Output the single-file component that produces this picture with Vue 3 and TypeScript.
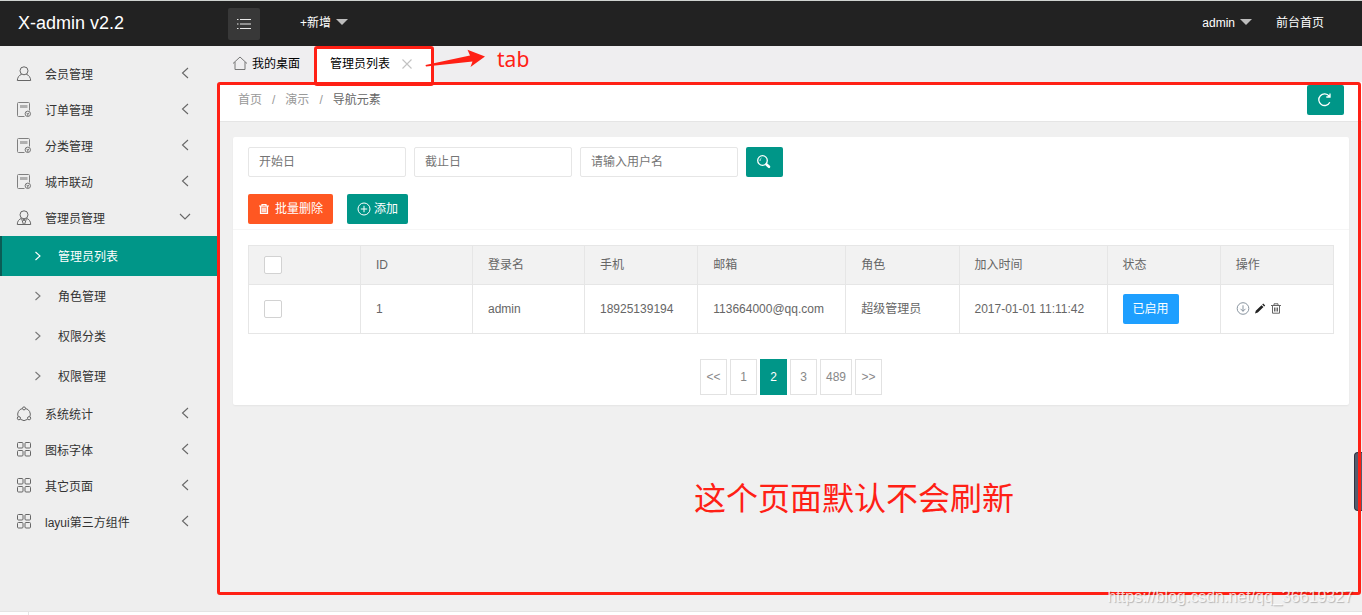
<script setup lang="ts">
import { ref } from 'vue'

interface MenuItem {
  label: string
  icon: 'user' | 'form' | 'admin' | 'share' | 'grid'
  children?: string[]
}

const menu: MenuItem[] = [
  { label: '会员管理', icon: 'user' },
  { label: '订单管理', icon: 'form' },
  { label: '分类管理', icon: 'form' },
  { label: '城市联动', icon: 'form' },
  { label: '管理员管理', icon: 'admin', children: ['管理员列表', '角色管理', '权限分类', '权限管理'] },
  { label: '系统统计', icon: 'share' },
  { label: '图标字体', icon: 'grid' },
  { label: '其它页面', icon: 'grid' },
  { label: 'layui第三方组件', icon: 'grid' },
]

const current = ref('管理员列表')
const startDate = ref('')
const endDate = ref('')
const username = ref('')

const headers = ['ID', '登录名', '手机', '邮箱', '角色', '加入时间', '状态', '操作']
const rows = [
  { id: 1, login: 'admin', phone: '18925139194', mail: '113664000@qq.com', role: '超级管理员', time: '2017-01-01 11:11:42' },
]
const pages = ['<<', '1', '2', '3', '489', '>>']
const page = ref('2')
</script>

<template>
  <div class="page">
    <header class="topbar">
      <a class="logo" href="#">X-admin v2.2</a>
      <button class="toggle" type="button" aria-label="菜单">
        <svg width="16" height="12" viewBox="0 0 16 12" fill="none" stroke="#e8e8e8" stroke-width="1.2">
          <path d="M4 1.5h11M4 6h11M4 10.5h11M1 1.5h1.5M1 6h1.5M1 10.5h1.5" />
        </svg>
      </button>
      <a class="top-link" href="#">+新增<i class="caret"></i></a>
      <nav class="top-right">
        <a class="top-link" href="#">admin<i class="caret"></i></a>
        <a class="top-link" href="#">前台首页</a>
      </nav>
    </header>

    <div class="body">
      <aside class="sidebar">
        <ul class="menu">
          <li v-for="item in menu" :key="item.label">
            <a class="menu-link" href="#">
              <svg class="menu-icon" viewBox="0 0 16 16" fill="none" stroke="#666" stroke-width="1">
                <template v-if="item.icon === 'user'">
                  <circle cx="8" cy="4.8" r="4" />
                  <path d="M5.7 8.2C3 9.3 1.5 11.3 1.3 14.5h13.4c-.2-3.2-1.7-5.200-4.400-6.300" />
                </template>
                <template v-else-if="item.icon === 'admin'">
                  <circle cx="8" cy="4.8" r="4" />
                  <path d="M5.7 8.2C3 9.3 1.3 11 1.3 14.5h13.4c0-3.500-1.7-5.200-4.400-6.300M5.7 9l1.600 5M10.300 9l-1.600 5M7.200 9.500h1.600L8 11z" />
                </template>
                <template v-else-if="item.icon === 'form'">
                  <path d="M8.500 14.500H2.500a1 1 0 0 1-1-1v-12a1 1 0 0 1 1-1h10a1 1 0 0 1 1 1V8.500" stroke="#808080" />
                  <path d="M4 4.500h7.500" stroke="#b0b0b0" stroke-width="3" />
                  <circle cx="11.800" cy="11.800" r="2.700" stroke="#777" />
                  <path d="M10.400 11l1.400.8 1.400-.8M11.800 12v2" stroke="#777" />
                </template>
                <template v-else-if="item.icon === 'share'">
                  <path d="M6.400 2.500A6 6 0 0 0 2.100 10.600M9.600 2.500a6 6 0 0 1 4.300 8.100M4.400 13.300a6 6 0 0 0 7.200 0" />
                  <circle cx="8" cy="2.400" r="1.500" />
                  <circle cx="2.900" cy="12.200" r="1.600" />
                  <circle cx="13.100" cy="12.200" r="1.600" />
                </template>
                <template v-else>
                  <rect x="1.500" y=".5" width="5.500" height="5.500" rx="1" />
                  <rect x="9" y=".5" width="5.500" height="5.500" rx="1" />
                  <rect x="1.500" y="8.500" width="5.500" height="5.500" rx="1" />
                  <rect x="9" y="8.500" width="5.500" height="5.500" rx="1" />
                </template>
              </svg>
              <span class="menu-text">{{ item.label }}</span>
              <svg class="arrow" viewBox="0 0 12 12" fill="none" stroke="#666" stroke-width="1.100">
                <path v-if="item.children" d="M1 3l5 5 5-5" />
                <path v-else d="M9 1L3.500 6 9 11" />
              </svg>
            </a>
            <ul v-if="item.children" class="submenu">
              <li v-for="child in item.children" :key="child">
                <a class="sub-link" :class="{ active: child === current }" href="#" @click.prevent="current = child">
                  <svg width="8" height="10" viewBox="0 0 8 10" fill="none" stroke="currentColor" stroke-width="1.100">
                    <path d="M1.500 1L6 5 1.500 9" />
                  </svg>
                  <span>{{ child }}</span>
                </a>
              </li>
            </ul>
          </li>
        </ul>
      </aside>

      <main class="main">
        <div class="tabs">
          <a class="tab" href="#">
            <svg width="16" height="16" viewBox="0 0 16 16" fill="none" stroke="#777" stroke-width="1">
              <path d="M1 7.500L8 1l7 6.500M3 6v7.500h10V6" />
            </svg>
            <span>我的桌面</span>
          </a>
          <div class="tab tab-current">
            <span>管理员列表</span>
            <button class="close" type="button" aria-label="关闭">
              <svg width="10" height="10" viewBox="0 0 10 10" stroke="#c2c2c2" stroke-width="1.100"><path d="M.5.5l9 9M9.500.5l-9 9" /></svg>
            </button>
            <div class="tab-frame"></div>
            <div class="tab-note">
              <svg width="62" height="20" viewBox="0 0 62 20" fill="#ff2015">
                <path d="M.5 16L45 6.500 42.500.800 60 7.500 45.500 18l2-5.500L1 17.500z" />
              </svg>
              <span>tab</span>
            </div>
          </div>
        </div>

        <section class="content">
          <div class="crumbs">
            <nav class="crumb-list">
              <a href="#">首页</a><span>/</span><a href="#">演示</a><span>/</span><cite>导航元素</cite>
            </nav>
            <button class="btn icon-btn" type="button" aria-label="刷新">
              <svg width="16" height="16" viewBox="0 0 16 16" fill="none" stroke="#fff" stroke-width="1.300">
                <path d="M12.800 10.200A5.800 5.800 0 1 1 12.200 4.200M13 1.500V5H9.300" />
              </svg>
            </button>
          </div>

          <div class="card">
            <form class="search" @submit.prevent>
              <input v-model="startDate" type="text" placeholder="开始日" aria-label="开始日" />
              <input v-model="endDate" type="text" placeholder="截止日" aria-label="截止日" />
              <input v-model="username" type="text" placeholder="请输入用户名" aria-label="请输入用户名" />
              <button class="btn icon-btn" type="submit" aria-label="搜索">
                <svg width="16" height="16" viewBox="0 0 16 16" fill="none" stroke="#fff">
                  <circle cx="6.500" cy="6.500" r="4.800" stroke-width="1.300" />
                  <path d="M4 7a3 3 0 0 1 1.500-3" stroke-width=".8" />
                  <path d="M10.500 10.500l2.500 2.300" stroke-width="2.600" stroke-linecap="round" />
                </svg>
              </button>
            </form>
            <div class="actions">
              <button class="btn danger" type="button">
                <svg width="12" height="12" viewBox="0 0 12 12" fill="none" stroke="#fff" stroke-width="1.200">
                  <path d="M1 3h10M4 2.800V1.500h4v1.300" />
                  <path d="M2.500 3v7.500h7V3M5 5v4M7 5v4" fill="#fff" fill-opacity=".4" />
                </svg>
                <span>批量删除</span>
              </button>
              <button class="btn" type="button">
                <svg width="14" height="14" viewBox="0 0 14 14" fill="none" stroke="#fff" stroke-width="1">
                  <circle cx="7" cy="7" r="6" /><path d="M3.800 7h6.400M7 3.800v6.400" />
                </svg>
                <span>添加</span>
              </button>
            </div>
            <div class="card-body">
              <table class="grid">
                <colgroup>
                  <col class="narrow" /><col class="narrow" /><col class="narrow" /><col /><col class="wide" /><col /><col class="wide" /><col /><col />
                </colgroup>
                <thead>
                  <tr>
                    <th><input type="checkbox" aria-label="全选" /></th>
                    <th v-for="h in headers" :key="h">{{ h }}</th>
                  </tr>
                </thead>
                <tbody>
                  <tr v-for="r in rows" :key="r.id">
                    <td><input type="checkbox" :aria-label="r.login" /></td>
                    <td>{{ r.id }}</td>
                    <td>{{ r.login }}</td>
                    <td>{{ r.phone }}</td>
                    <td>{{ r.mail }}</td>
                    <td>{{ r.role }}</td>
                    <td>{{ r.time }}</td>
                    <td><button class="btn status" type="button">已启用</button></td>
                    <td>
                      <div class="ops">
                        <button type="button" aria-label="停用">
                          <svg width="14" height="14" viewBox="0 0 14 14" fill="none" stroke="#7c8894" stroke-width=".9">
                            <circle cx="7" cy="6.500" r="5.800" /><path d="M7 3.300v6M4.500 6.800L7 9.300l2.500-2.500" />
                          </svg>
                        </button>
                        <button type="button" aria-label="编辑">
                          <svg width="12" height="12" viewBox="0 0 12 12" fill="#222">
                            <path d="M1 10.500l.8-2.800L7.500 2.200l2 1.900L3.800 9.600zM8.200 1.500l1-1 2 1.900-1 1z" />
                          </svg>
                        </button>
                        <button type="button" aria-label="删除">
                          <svg width="12" height="12" viewBox="0 0 12 12" fill="none" stroke="#666" stroke-width="1">
                            <path d="M1 2.500h10M4 2.300V.800h4v1.500M2.500 2.500v7.700h7V2.500M4.500 4.500v4M6 4.500v4M7.500 4.500v4" />
                          </svg>
                        </button>
                      </div>
                    </td>
                  </tr>
                </tbody>
              </table>
              <nav class="pager">
                <a v-for="p in pages" :key="p" href="#" :class="{ on: p === page }" @click.prevent="page = p">{{ p }}</a>
              </nav>
            </div>
          </div>

          <p class="note">这个页面默认不会刷新</p>
          <div class="side-handle"></div>
          <div class="frame"></div>
          <div class="watermark">https://blog.csdn.net/qq_36619327</div>
        </section>
      </main>
    </div>
    <footer class="bottom"><span></span></footer>
  </div>
</template>

<style>
body {
  margin: 0;
}
</style>

<style scoped>
* {
  box-sizing: border-box;
}
.page {
  min-height: 100vh;
  display: flex;
  flex-direction: column;
  font: 12px/24px "Liberation Sans", "Noto Sans CJK SC", sans-serif;
  color: #666;
  background: #f0f0f0;
  overflow: hidden;
}
a {
  color: inherit;
  text-decoration: none;
}
ul {
  list-style: none;
  margin: 0;
  padding: 0;
}
svg {
  display: block;
  flex: none;
}
button {
  font: inherit;
  border: 0;
  padding: 0;
  background: none;
  cursor: pointer;
}
.topbar {
  height: 46px;
  display: flex;
  align-items: center;
  background: #222;
  border-top: 1px solid #cfd3d0;
  color: #fff;
}
.logo {
  width: 228px;
  padding: 0 0 2px 18px;
  font-size: 18px;
}
.toggle {
  width: 32px;
  height: 32px;
  margin-right: 40px;
  display: grid;
  place-items: center;
  border-radius: 2px;
  background: #383838;
}
.top-link {
  display: flex;
  align-items: center;
  gap: 5px;
  padding-bottom: 2px;
}
.caret {
  border: 6px solid transparent;
  border-top-color: #bdbdbd;
  border-bottom: 0;
  margin-bottom: 2px;
}
.top-right {
  margin-left: auto;
  margin-right: 38px;
  display: flex;
  gap: 24px;
}
.body {
  flex: 1;
  display: flex;
}
.sidebar {
  width: 220px;
  flex: none;
  padding-top: 10px;
  background: #eee;
  color: #333;
}
.menu-link {
  height: 36px;
  display: flex;
  align-items: center;
  padding: 0 29px 0 16px;
}
.menu-icon {
  width: 16px;
  height: 16px;
}
.menu-text {
  flex: 1;
  margin-left: 13px;
  padding-top: 2px;
}
.arrow {
  width: 12px;
  height: 12px;
  margin-bottom: 2px;
}
.sub-link {
  height: 40px;
  display: flex;
  align-items: center;
  gap: 16px;
  padding-left: 32px;
  border-left: 2px solid transparent;
}
.sub-link span {
  padding-top: 2px;
}
.sub-link svg {
  color: #777;
}
.sub-link.active {
  background: #009688;
  border-left-color: #0a5c55;
  color: #fff;
}
.sub-link.active svg {
  color: #fff;
}
.main {
  flex: 1;
  min-width: 0;
  display: flex;
  flex-direction: column;
}
.tabs {
  height: 36px;
  display: flex;
  background: #efeef0;
  color: #000;
}
.tab {
  display: flex;
  align-items: center;
  gap: 4px;
  padding: 0 16px 0 12px;
}
.tab-current {
  position: relative;
  gap: 12px;
  padding: 0 20px 0 14px;
  background: #fff;
}
.tab-frame {
  position: absolute;
  inset: 0 -2px -4px -2px;
  border: 3px solid #ff2015;
  border-radius: 3px;
  z-index: 3;
}
.tab-note {
  position: absolute;
  left: 109px;
  top: 0;
  z-index: 4;
  display: flex;
  align-items: center;
  gap: 10px;
  color: #ff2015;
  font: 21px/26px "Noto Sans", sans-serif;
}
.content {
  position: relative;
  flex: 1;
}
.crumbs {
  height: 40px;
  display: flex;
  align-items: center;
  justify-content: space-between;
  padding: 0 18px 3px;
  background: #fff;
  border-bottom: 1px solid #e5e5e5;
}
.crumb-list {
  display: flex;
  color: #999;
}
.crumb-list span {
  margin: 0 10px;
}
.crumb-list cite {
  font-style: normal;
  color: #666;
}
.btn {
  height: 30px;
  padding: 0 10px;
  display: inline-flex;
  align-items: center;
  gap: 3px;
  border-radius: 2px;
  background: #009688;
  color: #fff;
}
.icon-btn {
  width: 37px;
}
.danger {
  background: #ff5722;
  gap: 5px;
}
.status {
  background: #1e9fff;
  vertical-align: middle;
}
.card {
  margin: 15px 13px 0;
  background: #fff;
  border-radius: 2px;
  box-shadow: 0 1px 2px rgba(0, 0, 0, 0.05);
}
.search {
  display: flex;
  gap: 8px;
  padding: 10px 15px 0;
}
.search input {
  width: 158px;
  height: 30px;
  padding: 0 10px;
  border: 1px solid #e6e6e6;
  border-radius: 2px;
  font: inherit;
  color: #666;
  background: #fff;
}
.search input::placeholder {
  color: #757575;
}
.actions {
  display: flex;
  gap: 14px;
  padding: 17px 15px 5px;
  border-bottom: 1px solid #f6f6f6;
}
.card-body {
  padding: 15px 15px 10px;
}
.grid {
  width: 100%;
  table-layout: fixed;
  border-collapse: collapse;
}
.narrow {
  width: 112px;
}
.wide {
  width: 148px;
}
.grid th,
.grid td {
  height: 49px;
  padding: 0 15px;
  border: 1px solid #e6e6e6;
  text-align: left;
  font-weight: 400;
  white-space: nowrap;
}
.grid th {
  height: 39px;
  background: #f2f2f2;
}
.grid input {
  appearance: none;
  display: block;
  width: 18px;
  height: 18px;
  margin: 0;
  border: 1px solid #d2d2d2;
  border-radius: 2px;
  background: #fff;
}
.ops {
  display: flex;
  align-items: center;
  gap: 4px;
}
.pager {
  display: flex;
  justify-content: center;
  gap: 3px;
  margin-top: 25px;
}
.pager a {
  height: 36px;
  min-width: 27px;
  padding: 0 5px;
  border: 1px solid #e2e2e2;
  line-height: 34px;
  text-align: center;
  color: #888;
}
.pager a.on {
  background: #009688;
  border-color: #009688;
  color: #fff;
}
.note {
  margin: 70px 0 0;
  padding-left: 126px;
  text-align: center;
  font-size: 32px;
  line-height: 48px;
  color: #ff2015;
}
.side-handle {
  position: absolute;
  right: 0;
  top: 370px;
  width: 8px;
  height: 59px;
  border: 1px solid #2f3440;
  border-right: 0;
  border-radius: 4px 0 0 4px;
  background: #555d6e;
}
.frame {
  position: absolute;
  inset: 0 1px 16px -3px;
  border: 3px solid #ff2015;
  border-radius: 3px;
  pointer-events: none;
}
.watermark {
  position: absolute;
  right: 9px;
  bottom: 2px;
  font-size: 16px;
  color: rgba(255, 255, 255, 0.8);
  text-shadow: 1px 1px 1px rgba(0, 0, 0, 0.25);
}
.bottom {
  height: 4px;
  border-top: 1px solid #e4e4e4;
  background: #fff;
  display: flex;
}
.bottom span {
  width: 29px;
  border-right: 1px solid #e4e4e4;
}
</style>
